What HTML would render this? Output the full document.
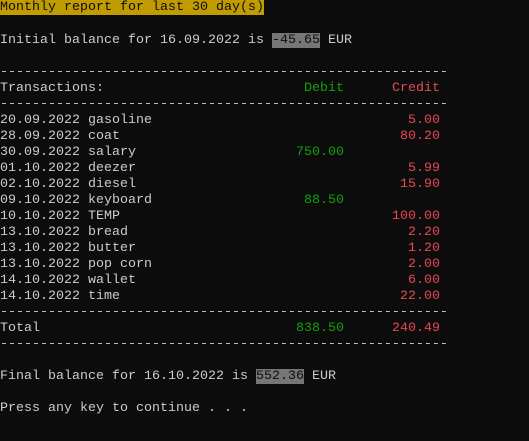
<!DOCTYPE html>
<html><head><style>
html,body{margin:0;padding:0;background:#0c0c0c;width:529px;height:441px;overflow:hidden}
body{font-family:"Liberation Mono",monospace;font-size:13.33px;line-height:16px;color:#cccccc}
.r{position:absolute;left:0;height:16px;white-space:pre;width:529px;margin-top:1px}
.d{position:absolute;right:185px;color:#13a10e}
.c{position:absolute;right:89px;color:#e74856}
.y{background:#c19c00;color:#0c0c0c}
.g{background:#767676;color:#0c0c0c}
</style></head><body>
<div class="r" style="top:0;margin-top:0"><span class="y">Monthly report for last 30 day(s)</span></div>
<div class="r" style="top:32px">Initial balance for 16.09.2022 is <span class="g">-45.65</span> EUR</div>
<div class="r" style="top:64px">--------------------------------------------------------</div>
<div class="r" style="top:80px">Transactions:<span class="d">Debit</span><span class="c">Credit</span></div>
<div class="r" style="top:96px">--------------------------------------------------------</div>
<div class="r" style="top:112px">20.09.2022 gasoline<span class="c">5.00</span></div>
<div class="r" style="top:128px">28.09.2022 coat<span class="c">80.20</span></div>
<div class="r" style="top:144px">30.09.2022 salary<span class="d">750.00</span></div>
<div class="r" style="top:160px">01.10.2022 deezer<span class="c">5.99</span></div>
<div class="r" style="top:176px">02.10.2022 diesel<span class="c">15.90</span></div>
<div class="r" style="top:192px">09.10.2022 keyboard<span class="d">88.50</span></div>
<div class="r" style="top:208px">10.10.2022 TEMP<span class="c">100.00</span></div>
<div class="r" style="top:224px">13.10.2022 bread<span class="c">2.20</span></div>
<div class="r" style="top:240px">13.10.2022 butter<span class="c">1.20</span></div>
<div class="r" style="top:256px">13.10.2022 pop corn<span class="c">2.00</span></div>
<div class="r" style="top:272px">14.10.2022 wallet<span class="c">6.00</span></div>
<div class="r" style="top:288px">14.10.2022 time<span class="c">22.00</span></div>
<div class="r" style="top:304px">--------------------------------------------------------</div>
<div class="r" style="top:320px">Total<span class="d">838.50</span><span class="c">240.49</span></div>
<div class="r" style="top:336px">--------------------------------------------------------</div>
<div class="r" style="top:368px">Final balance for 16.10.2022 is <span class="g">552.36</span> EUR</div>
<div class="r" style="top:400px">Press any key to continue . . .</div>
</body></html>
